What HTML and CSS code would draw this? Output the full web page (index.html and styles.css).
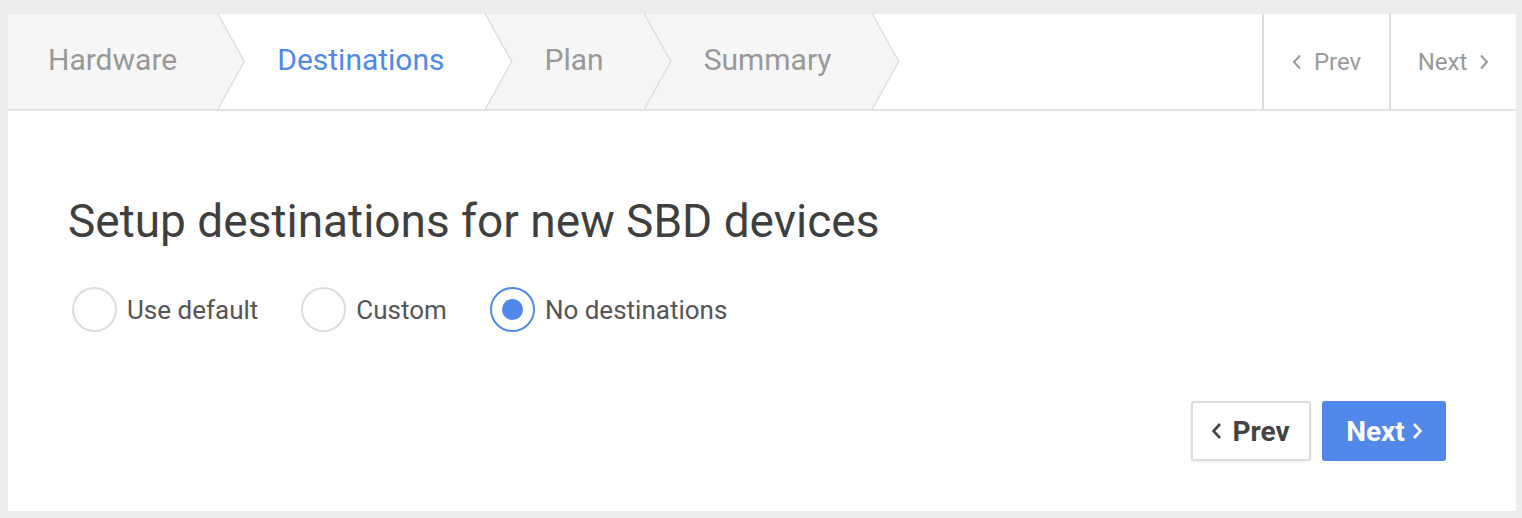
FILE: index.html
```html
<!DOCTYPE html>
<html>
<head>
<meta charset="utf-8">
<link rel="stylesheet" href="styles.css">
</head>
<body>
<div class="panel">
  <div class="wizard-head">
    <ol class="steps">
      <li class="step first">Hardware</li>
      <li class="step active">Destinations</li>
      <li class="step">Plan</li>
      <li class="step last">Summary</li>
    </ol>
    <div class="head-nav">
      <button class="nav-btn"><svg class="chev" viewBox="0 0 10 16" width="10" height="16"><polyline points="8,1.5 2,8 8,14.5"/></svg>Prev</button>
      <button class="nav-btn">Next<svg class="chev" viewBox="0 0 10 16" width="10" height="16"><polyline points="2,1.5 8,8 2,14.5"/></svg></button>
    </div>
  </div>
  <div class="content">
    <h1 class="title">Setup destinations for new SBD devices</h1>
    <div class="radios">
      <label class="radio"><span class="circle"></span>Use default</label>
      <label class="radio"><span class="circle"></span>Custom</label>
      <label class="radio checked"><span class="circle"></span>No destinations</label>
    </div>
    <div class="actions">
      <button class="btn btn-default"><svg class="bchev" viewBox="0 0 10 16" width="10" height="16"><polyline points="8,1 1.5,8 8,15"/></svg>Prev</button>
      <button class="btn btn-primary">Next<svg class="bchev" viewBox="0 0 10 16" width="10" height="16"><polyline points="2,1 8.5,8 2,15"/></svg></button>
    </div>
  </div>
</div>
</body>
</html>
```

FILE: styles.css
```css
html, body {
  margin: 0;
  padding: 0;
  background: #ececec;
}
body {
  padding: 14px 6px 7px 8px;
  font-family: Roboto, "Liberation Sans", sans-serif;
}
.panel {
  background: #fff;
  height: 497px;
  display: flex;
  flex-direction: column;
}
.wizard-head {
  display: flex;
  height: 95px;
  border-bottom: 2px solid #e3e3e3;
}
.steps {
  display: flex;
  list-style: none;
  margin: 0;
  padding: 0;
  flex: 1;
}
.step {
  position: relative;
  display: flex;
  align-items: center;
  padding: 0 40px 4px 60px;
  background: #f6f6f6;
  color: #999;
  font-size: 30px;
}
.step.first {
  padding-left: 40px;
}
.step.active {
  background: #fff;
  color: #5089ea;
}
.step::before {
  content: "";
  position: absolute;
  left: 100%;
  top: 0;
  width: 28px;
  height: 100%;
  background: #dcdcdc;
  clip-path: polygon(0 0, 1.5px 0, 28px 50%, 1.5px 100%, 0 100%);
  z-index: 2;
}
.step::after {
  content: "";
  position: absolute;
  left: calc(100% - 2px);
  top: 0;
  width: 28.5px;
  height: 100%;
  background: #f6f6f6;
  clip-path: polygon(0 0, 2px 0, 28.5px 50%, 2px 100%, 0 100%);
  z-index: 3;
}
.step.active::after {
  background: #fff;
}
.head-nav {
  display: flex;
}
.nav-btn {
  width: 127px;
  border: 0;
  border-left: 2px solid #dcdcdc;
  background: #fff;
  color: #999;
  font-family: inherit;
  font-size: 24px;
  display: flex;
  align-items: center;
  justify-content: center;
  gap: 12px;
  padding: 0;
}
.chev {
  fill: none;
  stroke: #999;
  stroke-width: 2;
}
.content {
  flex: 1;
  display: flex;
  flex-direction: column;
  padding: 83px 70px 50px 60px;
}
.title {
  margin: 0;
  font-size: 46px;
  font-weight: 400;
  color: #3f3f3f;
}
.radios {
  display: flex;
  gap: 43px;
  margin-top: 39px;
  padding-left: 4px;
}
.radio {
  display: flex;
  align-items: center;
  gap: 10px;
  font-size: 26px;
  color: #555;
}
.circle {
  width: 41px;
  height: 41px;
  border: 2px solid #dcdcdc;
  border-radius: 50%;
  display: flex;
  align-items: center;
  justify-content: center;
}
.radio.checked .circle {
  border-color: #5089ea;
}
.radio.checked .circle::after {
  content: "";
  width: 21px;
  height: 21px;
  border-radius: 50%;
  background: #5089ea;
}
.actions {
  margin-top: auto;
  display: flex;
  justify-content: flex-end;
  gap: 11px;
}
.btn {
  height: 60px;
  border-radius: 3px;
  font-family: inherit;
  font-size: 28px;
  font-weight: 700;
  display: flex;
  align-items: center;
  justify-content: center;
  padding: 0;
}
.btn-default {
  width: 120px;
  gap: 10px;
  background: #fff;
  border: 2px solid #dcdcdc;
  color: #444;
  box-shadow: 0 1px 2px rgba(0,0,0,0.08);
}
.btn-primary {
  width: 124px;
  gap: 7px;
  background: #5288ea;
  border: 0;
  color: #fff;
}
.bchev {
  fill: none;
  stroke: currentColor;
  stroke-width: 2.6;
}
```
